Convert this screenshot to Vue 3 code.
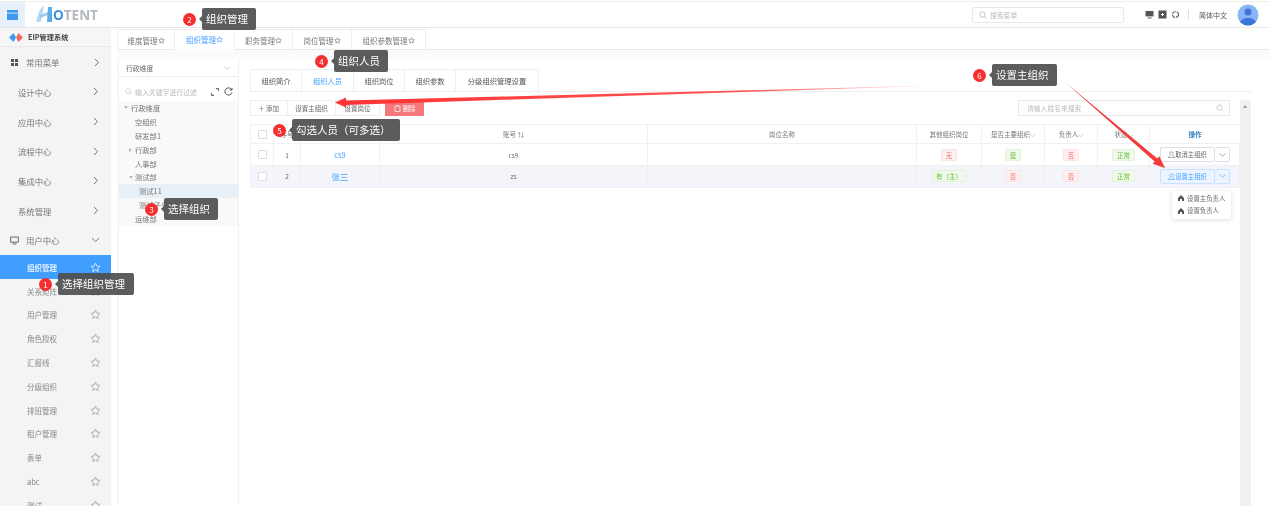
<script setup>
const tabs = ['维度管理', '组织管理', '职务管理', '岗位管理', '组织参数管理']
const tabWidths = [58, 60, 58, 59, 74]
const sideTop = ['设计中心', '应用中心', '流程中心', '集成中心', '系统管理']
const sideSub = ['关系矩阵', '用户管理', '角色授权', '汇报线', '分级组织', '排班管理', '租户管理', '表单', 'abc', '测试']
const tree = [
  { t: '行政维度', lv: 0, caret: 'd' },
  { t: '空组织', lv: 1 },
  { t: '研发部1', lv: 1 },
  { t: '行政部', lv: 1, caret: 'r' },
  { t: '人事部', lv: 1 },
  { t: '测试部', lv: 1, caret: 'd' },
  { t: '测试11', lv: 2, sel: true },
  { t: '测试子分部', lv: 2 },
  { t: '运维部', lv: 1 },
]
const subTabs = [['组织简介', 51], ['组织人员', 52], ['组织岗位', 51], ['组织参数', 51], ['分级组织管理设置', 82]]
const notes = [
  { n: 1, t: '选择组织管理', x: 39, y: 273, w: 76 },
  { n: 2, t: '组织管理', x: 183, y: 8, w: 54 },
  { n: 3, t: '选择组织', x: 145, y: 198, w: 54 },
  { n: 4, t: '组织人员', x: 315, y: 50, w: 54 },
  { n: 5, t: '勾选人员（可多选）', x: 273, y: 119, w: 108 },
  { n: 6, t: '设置主组织', x: 973, y: 64, w: 65 },
]
const star = 'M6 1.2 7.4 4.3 10.8 4.7 8.3 7 9 10.4 6 8.7 3 10.4 3.7 7 1.2 4.7 4.6 4.3Z'
const person = 'M3.5 .8a1.6 1.6 0 0 1 1 2.9v.6l2 1.6v.6H.5v-.6l2-1.6v-.6a1.6 1.6 0 0 1 1-2.9Z'
</script>

<template>
  <div class="page">
    <header class="top">
      <div class="menu-btn">
        <svg width="11" height="10" viewBox="0 0 11 10"><path d="M0 0h11v10H0z" fill="#3f9bf0"/><path d="M0 2.6h11v.9H0z" fill="#dcebfa"/></svg>
      </div>
      <div class="logo">
        <svg width="17" height="17" viewBox="0 0 17 17"><path d="M0 16 3 6C4 3 6 1 8 0L5 16Z" fill="#b5d9f4"/><path d="M4 9 12 6V9L4 12Z" fill="#9ccaf0"/><path d="M12 1H16V16H11Z" fill="#5cacea"/></svg>
        <span class="logo-text"><i>O</i>TENT</span>
      </div>
      <div class="top-right">
        <div class="menu-search">
          <svg width="8" height="8" viewBox="0 0 8 8"><circle cx="3.5" cy="3.5" r="2.7" fill="none" stroke="#aaa" stroke-width=".7"/><path d="M5.5 5.5 7.4 7.4" stroke="#aaa" stroke-width=".7"/></svg>
          <span>搜索菜单</span>
        </div>
        <div class="tools">
          <svg width="9" height="9" viewBox="0 0 9 9"><path d="M.5 1h8v5.4h-8z" fill="#555"/><path d="M2.5 8h4" stroke="#555"/></svg>
          <svg width="9" height="9" viewBox="0 0 9 9"><path d="M.5.5h8v8h-8z" fill="#555"/><path d="M3 4.5h3M4.5 3v3" stroke="#fff"/></svg>
          <svg width="9" height="9" viewBox="0 0 9 9"><circle cx="4.5" cy="4.5" r="3" fill="none" stroke="#666" stroke-width="1.2" stroke-dasharray="4 1"/></svg>
        </div>
        <span class="divider"></span>
        <span class="lang">简体中文</span>
        <svg class="avatar" width="22" height="22" viewBox="0 0 22 22"><defs><clipPath id="av"><circle cx="11" cy="11" r="10.5"/></clipPath></defs><circle cx="11" cy="11" r="10.5" fill="#8ab4f3"/><g clip-path="url(#av)"><circle cx="11" cy="8" r="3.6" fill="#3f75d8"/><ellipse cx="11" cy="19" rx="8" ry="5" fill="#3f75d8"/></g></svg>
      </div>
    </header>

    <div class="body">
      <aside class="side">
        <div class="brand">
          <svg width="14" height="9" viewBox="0 0 14 9"><path d="M0 4.5 4.5 0l2.5 4.5L4.5 9Z" fill="#3d9cf2"/><path d="M7 4.5 9.5 0 14 4.5 9.5 9Z" fill="#ef6b57"/></svg>
          <b>EIP管理系统</b>
        </div>
        <div class="s-row first">
          <svg width="7" height="7" viewBox="0 0 7 7"><path d="M0 0h3v3H0zM4 0h3v3H4zM0 4h3v3H0zM4 4h3v3H4z" fill="#555"/></svg>
          <span>常用菜单</span>
          <svg class="chev" width="6" height="9" viewBox="0 0 6 9"><path d="M1 1l3.6 3.5L1 8" fill="none" stroke="#777" stroke-width="1"/></svg>
        </div>
        <div v-for="s in sideTop" :key="s" class="s-row plain">
          <span>{{ s }}</span>
          <svg class="chev" width="6" height="9" viewBox="0 0 6 9"><path d="M1 1l3.6 3.5L1 8" fill="none" stroke="#777" stroke-width="1"/></svg>
        </div>
        <div class="s-row user">
          <svg width="9" height="9" viewBox="0 0 9 9"><path d="M.7 1h7.6v5.2H.7zM2.5 8h4" fill="none" stroke="#666"/></svg>
          <span>用户中心</span>
          <svg class="chev" width="9" height="6" viewBox="0 0 9 6"><path d="M1 1l3.5 3.6L8 1" fill="none" stroke="#777" stroke-width="1"/></svg>
        </div>
        <div class="sub active">
          <span>组织管理</span>
          <svg width="11" height="11" viewBox="0 0 12 12"><path :d="star" fill="none" stroke="#fff" stroke-width=".8"/></svg>
        </div>
        <div v-for="s in sideSub" :key="s" class="sub">
          <span>{{ s }}</span>
          <svg width="11" height="11" viewBox="0 0 12 12"><path :d="star" fill="none" stroke="#999" stroke-width=".8"/></svg>
        </div>
      </aside>

      <main class="content">
        <nav class="tabs">
          <span v-for="(t, i) in tabs" :key="t" class="tab" :class="{ on: i === 1 }" :style="{ width: tabWidths[i] + 'px' }">{{ t }}<svg width="7" height="7" viewBox="0 0 12 12"><path :d="star" fill="none" :stroke="i === 1 ? '#409eff' : '#777'" stroke-width="1.1"/></svg></span>
        </nav>

        <div class="work">
          <section class="tree-panel">
            <div class="dim-select">
              <span>行政维度</span>
              <svg width="7" height="4" viewBox="0 0 7 4"><path d="M.5.5 3.5 3.2 6.5.5" fill="none" stroke="#bbb" stroke-width=".7"/></svg>
            </div>
            <div class="filter">
              <svg width="7" height="7" viewBox="0 0 8 8"><circle cx="3.5" cy="3.5" r="2.7" fill="none" stroke="#bbb" stroke-width=".7"/><path d="M5.5 5.5 7.4 7.4" stroke="#bbb" stroke-width=".7"/></svg>
              <span class="ph">输入关键字进行过滤</span>
              <svg class="exp" width="8" height="8" viewBox="0 0 8 8"><path d="M5 .6H7.4V3M.6 5V7.4H3" fill="none" stroke="#444" stroke-width=".9"/></svg>
              <svg width="9" height="9" viewBox="0 0 9 9"><path d="M7.8 3A3.6 3.6 0 1 0 8 5.4M8 .8V3H5.8" fill="none" stroke="#444" stroke-width=".9"/></svg>
            </div>
            <div class="tree">
              <div v-for="n in tree" :key="n.t" class="node" :class="['lv' + n.lv, { sel: n.sel }]">
                <i v-if="n.caret" class="caret" :class="n.caret"></i>
                <span>{{ n.t }}</span>
              </div>
            </div>
          </section>

          <section class="right">
            <div class="subtabs-wrap">
              <div class="subtabs">
                <span v-for="(s, i) in subTabs" :key="s[0]" :class="{ on: i === 1 }" :style="{ width: s[1] + 'px' }">{{ s[0] }}</span>
              </div>
            </div>
            <div class="right-body">
              <div class="table-area">
                <div class="toolbar">
                  <div class="btns">
                    <span class="btn w38"><em>+</em> 添加</span>
                    <span class="btn w48">设置主组织</span>
                    <span class="btn w43">设置岗位</span>
                  </div>
                  <span class="del">
                    <svg width="7" height="7" viewBox="0 0 7 7"><path d="M1 1.2h5v5.3H1zM2.6.5h1.8" fill="none" stroke="#fff" stroke-width=".7"/></svg>
                    删除
                  </span>
                  <div class="name-search">
                    <span>请输入姓名来搜索</span>
                    <svg width="8" height="8" viewBox="0 0 8 8"><circle cx="3.5" cy="3.5" r="2.7" fill="none" stroke="#bbb" stroke-width=".7"/><path d="M5.5 5.5 7.4 7.4" stroke="#bbb" stroke-width=".7"/></svg>
                  </div>
                </div>
                <div class="grid head">
                  <div><i class="cb"></i></div><div>序号</div><div>姓名</div><div>账号 ⇅</div><div>岗位名称</div>
                  <div>其他组织岗位</div><div>是否主要组织⌵</div><div>负责人⌵</div><div>状态⌵</div><div class="op">操作</div>
                </div>
                <div class="grid row">
                  <div><i class="cb"></i></div><div>1</div><div class="link">cs9</div><div>cs9</div><div></div>
                  <div><b class="tag red">无</b></div><div><b class="tag green">是</b></div><div><b class="tag red">否</b></div><div><b class="tag green">正常</b></div>
                  <div><span class="split"><span class="a"><svg width="7" height="7" viewBox="0 0 7 7"><path :d="person" fill="none" stroke="#777" stroke-width=".6"/></svg>取消主组织</span><span class="b"><svg width="7" height="4" viewBox="0 0 7 4"><path d="M.5.5 3.5 3.2 6.5.5" fill="none" stroke="#888" stroke-width=".7"/></svg></span></span></div>
                </div>
                <div class="grid row alt">
                  <div><i class="cb"></i></div><div>2</div><div class="link big">张三</div><div>zs</div><div></div>
                  <div><b class="tag green wide">有（主）</b></div><div><b class="tag red">否</b></div><div><b class="tag red">否</b></div><div><b class="tag green">正常</b></div>
                  <div><span class="split blue"><span class="a"><svg width="7" height="7" viewBox="0 0 7 7"><path :d="person" fill="none" stroke="#409eff" stroke-width=".6"/></svg>设置主组织</span><span class="b"><svg width="7" height="4" viewBox="0 0 7 4"><path d="M.5.5 3.5 3.2 6.5.5" fill="none" stroke="#6aa8f5" stroke-width=".7"/></svg></span></span></div>
                </div>
                <div class="blank">
                  <div class="drop">
                    <div><svg width="6" height="6" viewBox="0 0 6 6"><path d="M3 0 6 3v3H4V4H2v2H0V3Z" fill="#555"/></svg>设置主负责人</div>
                    <div><svg width="6" height="6" viewBox="0 0 6 6"><path d="M3 0 6 3v3H4V4H2v2H0V3Z" fill="#555"/></svg>设置负责人</div>
                  </div>
                </div>
              </div>
              <div class="scroll"><i></i></div>
            </div>
          </section>
        </div>
      </main>
    </div>

    <svg class="arrows" width="1269" height="506" viewBox="0 0 1269 506">
      <defs>
        <linearGradient id="g1" x1="955" y1="85" x2="340" y2="102" gradientUnits="userSpaceOnUse"><stop offset="0" stop-color="#f44" stop-opacity="0"/><stop offset=".35" stop-color="#f55"/><stop offset="1" stop-color="#f33"/></linearGradient>
      </defs>
      <path d="M955 85 346 100.5 346 97.5 335 102.5 346 107.5 346 105Z" fill="url(#g1)"/>
      <path d="M1066 83 1157.3 158.5 1159.3 156.2 1165 168 1152.7 163.8 1154.7 161.5Z" fill="#f23b3b"/>
    </svg>

    <div v-for="a in notes" :key="a.n" class="note" :style="{ left: a.x + 'px', top: a.y + 'px' }">
      <span class="num">{{ a.n }}</span>
      <span class="tip" :style="{ width: a.w + 'px' }">{{ a.t }}</span>
    </div>
  </div>
</template>

<style scoped>
.page { position: relative; width: 1269px; height: 506px; overflow: hidden; background: #fff; font-family: "Noto Sans CJK SC", "Noto Sans", sans-serif; color: #666; font-size: 6.5px; filter: blur(.4px); }
.top { height: 27px; margin-top: 1px; border-top: 1px solid #eee; border-bottom: 1px solid #e6e6e6; display: flex; align-items: center; box-sizing: border-box; }
.menu-btn { width: 25px; height: 25px; background: #e8f1fb; display: flex; align-items: center; justify-content: center; }
.logo { margin-left: 11px; display: flex; align-items: center; }
.logo-text { font: 700 13.5px "Open Sans", sans-serif; color: #b4b9be; line-height: 20px; }
.logo-text i { font-style: normal; color: #3c92df; }
.top-right { margin-left: auto; display: flex; align-items: center; }
.menu-search { width: 152px; height: 16px; box-sizing: border-box; border: 1px solid #e8e8e8; border-radius: 2px; display: flex; align-items: center; gap: 3px; padding-left: 6px; color: #bbb; margin-right: 21px; font-size: 6.8px; }
.tools { display: flex; gap: 4px; align-items: center; }
.divider { width: 1px; height: 10px; background: #ddd; margin: 0 10px 0 8px; }
.lang { color: #555; margin-right: 10px; font-size: 7px; }
.avatar { margin-right: 10px; }
.body { display: flex; height: 478px; }
.side { width: 111px; flex: none; background: #f4f4f4; overflow: hidden; }
.brand { height: 19px; box-sizing: border-box; display: flex; align-items: center; gap: 5px; padding-left: 9px; border-bottom: 1px solid #eaeaea; background: #f6f6f6; }
.brand b { font-weight: 700; font-size: 7.2px; color: #444; }
.s-row { height: 29.7px; display: flex; align-items: center; padding-left: 11px; font-size: 8.4px; color: #777; gap: 8px; }
.s-row.first { height: 30px; }
.s-row.plain { padding-left: 18px; }
.s-row.user { padding-left: 10px; gap: 7px; }
.chev { margin-left: auto; margin-right: 12px; }
.s-row:not(.plain) .chev { margin-right: 11px; }
.sub { height: 23.8px; display: flex; align-items: center; justify-content: space-between; padding: 0 10px 0 27px; font-size: 7.5px; color: #888; }
.sub.active { background: #409eff; color: #fff; height: 24px; font-weight: 500; }
.content { flex: 1; min-width: 0; padding-left: 6px; background: #fff; }
.tabs { display: flex; height: 21px; margin-top: 1px; border-bottom: 1px solid #e8e8e8; box-sizing: border-box; }
.tab { box-sizing: border-box; height: 21px; border: 1px solid #eee; border-bottom: none; border-left: none; display: flex; align-items: center; justify-content: center; color: #777; font-size: 7.5px; }
.tab:first-child { border-left: 1px solid #eee; }
.tab.on { color: #409eff; background: #fff; border-bottom: 1px solid #fff; }
.work { display: flex; padding-top: 9px; background: #fbfbfd; }
.tree-panel { width: 121px; margin-left: 1px; flex: none; height: 447px; border-right: 1px solid #f0f0f0; border-left: 1px solid #f2f2f2; box-sizing: border-box; background: #fff; }
.dim-select { height: 18px; box-sizing: border-box; border-bottom: 1px solid #eee; display: flex; align-items: center; justify-content: space-between; padding: 0 7px 0 7px; color: #666; font-size: 6.8px; }
.filter { height: 19px; margin-top: 5px; display: flex; align-items: center; padding: 0 5px 0 6px; gap: 3px; font-size: 6.9px; }
.filter .ph { color: #bbb; }
.filter .exp { margin-left: auto; margin-right: 2px; }
.tree { background: #f9f9f9; height: 125px; }
.node { height: 13.9px; display: flex; align-items: center; color: #777; position: relative; font-size: 7.3px; }
.node.lv0 { padding-left: 12px; }
.node.lv1 { padding-left: 16px; }
.node.lv2 { padding-left: 20px; }
.node.sel { background: #e8f0f7; }
.caret { position: absolute; width: 0; height: 0; }
.lv0 .caret { left: 5px; }
.lv1 .caret { left: 10px; }
.caret.d { border-left: 2px solid transparent; border-right: 2px solid transparent; border-top: 3px solid #bbb; }
.caret.r { border-top: 2px solid transparent; border-bottom: 2px solid transparent; border-left: 3px solid #bbb; }
.right { flex: 1; min-width: 0; padding: 10px 18px 0 11px; background: #fff; }
.subtabs-wrap { border-bottom: 1px solid #eee; height: 23px; box-sizing: border-box; }
.subtabs { display: inline-flex; height: 22px; border: 1px solid #eee; border-bottom: none; box-sizing: border-box; font-size: 7.3px; }
.subtabs span { box-sizing: border-box; display: flex; align-items: center; justify-content: center; border-right: 1px solid #eee; color: #555; }
.subtabs span:last-child { border-right: none; }
.subtabs .on { color: #409eff; }
.right-body { display: flex; padding-top: 8px; }
.table-area { width: 990px; flex: none; }
.toolbar { height: 16px; display: flex; align-items: stretch; margin-bottom: 8px; }
.btns { display: flex; border: 1px solid #eee; box-sizing: border-box; }
.btn { box-sizing: border-box; display: flex; align-items: center; justify-content: center; border-right: 1px solid #eee; color: #666; }
.btn:last-child { border-right: none; }
.btn em { font-style: normal; margin-right: 2px; font-size: 9px; color: #888; }
.w38 { width: 37px; } .w48 { width: 48px; } .w43 { width: 43px; }
.del { margin-left: 5px; width: 39px; background: #f6787a; color: #fff; display: flex; align-items: center; justify-content: center; gap: 2px; }
.name-search { margin-left: auto; margin-right: 10px; width: 212px; box-sizing: border-box; border: 1px solid #e8e8e8; display: flex; align-items: center; justify-content: space-between; padding: 0 5px 0 8px; color: #bbb; font-size: 6.8px; }
.grid { display: grid; grid-template-columns: 23px 27px 79px 268px 269px 65px 63px 53px 52px 90px; border-bottom: 1px solid #eff1f5; border-left: 1px solid #eff1f5; box-sizing: border-box; }
.grid > div { border-right: 1px solid #eff1f5; display: flex; align-items: center; justify-content: center; box-sizing: border-box; min-width: 0; }
.head { height: 20px; border-top: 1px solid #eff1f5; color: #777; white-space: nowrap; }
.head .op { color: #2f7fc1; font-weight: 700; border-right: none; }
.row { height: 22px; }
.row.alt { background: #f3f5fa; height: 21.5px; }
.link { color: #409eff; font-size: 7.5px; }
.link.big { font-size: 8.5px; }
.cb { display: block; width: 7px; height: 7px; border: 1px solid #ddd; border-radius: 1px; background: #fff; }
.tag { font-weight: 400; height: 12px; line-height: 10px; box-sizing: border-box; border: 1px solid; border-radius: 2px; padding: 0 4px; }
.tag.red { color: #f56c6c; background: #fef0f0; border-color: #fde2e2; }
.tag.green { color: #67c23a; background: #f0f9eb; border-color: #e1f3d8; }
.tag.wide { width: 35px; padding: 0; text-align: center; }
.split { display: flex; height: 15px; width: 70px; margin-left: 1px; }
.split span { box-sizing: border-box; border: 1px solid #dcdfe6; background: #fff; display: flex; align-items: center; justify-content: center; border-radius: 2px; }
.split .a { width: 55px; color: #666; white-space: nowrap; font-size: 6.3px; }
.split .b { width: 15px; border-left: none; }
.split.blue span { background: #ecf5ff; border-color: #c6e2ff; }
.split.blue .a { color: #409eff; }
.blank { position: relative; height: 319px; }
.drop { position: absolute; left: 922px; top: 3.5px; width: 59px; height: 28px; background: #fff; box-shadow: 0 1px 5px rgba(0,0,0,.14); border-radius: 2px; box-sizing: border-box; padding: 1px 0 0 6px; color: #666; font-size: 6.4px; }
.drop div { height: 12.5px; display: flex; align-items: center; gap: 3px; white-space: nowrap; }
.scroll { width: 11px; height: 406px; background: #f1f1f1; position: relative; }
.scroll i { position: absolute; left: 3px; top: 5px; border-left: 2.5px solid transparent; border-right: 2.5px solid transparent; border-bottom: 3px solid #999; }
.arrows { position: absolute; left: 0; top: 0; pointer-events: none; }
.note { position: absolute; display: flex; align-items: center; height: 22px; }
.num { width: 13px; height: 13px; border-radius: 50%; background: #f52f2f; color: #fff; font-size: 8px; line-height: 13px; text-align: center; margin-right: 6px; flex: none; }
.tip { position: relative; height: 22px; line-height: 21px; box-sizing: border-box; background: rgba(78,78,78,.92); color: #fff; font-size: 10.5px; padding-left: 4px; border-radius: 2px; white-space: nowrap; }
.tip::before { content: ""; position: absolute; left: -3px; top: 8px; border-top: 3px solid transparent; border-bottom: 3px solid transparent; border-right: 3px solid rgba(78,78,78,.92); }
</style>

<style>
html, body { margin: 0; overflow: hidden; background: #fff; }
</style>
